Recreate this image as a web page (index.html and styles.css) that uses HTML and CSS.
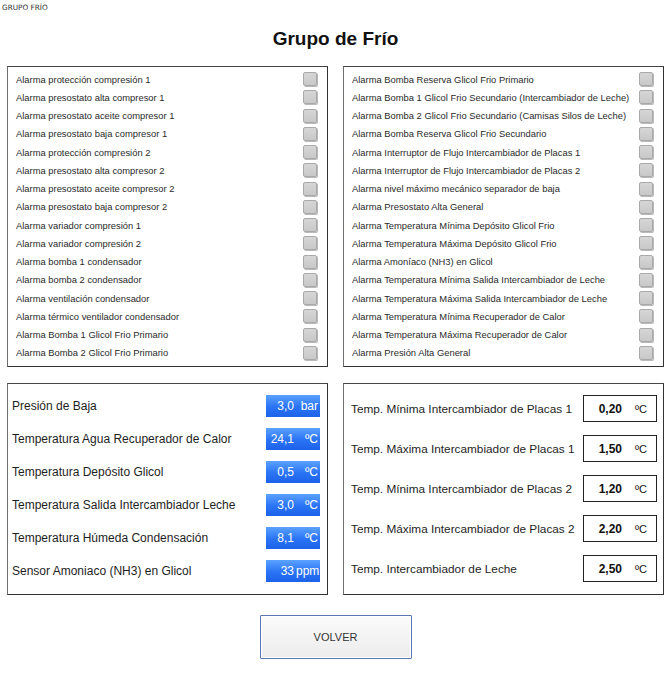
FILE: index.html
```html
<!DOCTYPE html>
<html lang="es">
<head>
<meta charset="utf-8">
<title>Grupo de Frío</title>
<link rel="stylesheet" href="styles.css">
</head>
<body>
<div class="page">
  <div class="caption">GRUPO FRÍO</div>
  <h1 class="title">Grupo de Frío</h1>
  <div class="grid">
    <div class="panel alarms">
      <div class="alarm"><span>Alarma protección compresión 1</span><i class="chk"></i></div>
      <div class="alarm"><span>Alarma presostato alta compresor 1</span><i class="chk"></i></div>
      <div class="alarm"><span>Alarma presostato aceite compresor 1</span><i class="chk"></i></div>
      <div class="alarm"><span>Alarma presostato baja compresor 1</span><i class="chk"></i></div>
      <div class="alarm"><span>Alarma protección compresión 2</span><i class="chk"></i></div>
      <div class="alarm"><span>Alarma presostato alta compresor 2</span><i class="chk"></i></div>
      <div class="alarm"><span>Alarma presostato aceite compresor 2</span><i class="chk"></i></div>
      <div class="alarm"><span>Alarma presostato baja compresor 2</span><i class="chk"></i></div>
      <div class="alarm"><span>Alarma variador compresión 1</span><i class="chk"></i></div>
      <div class="alarm"><span>Alarma variador compresión 2</span><i class="chk"></i></div>
      <div class="alarm"><span>Alarma bomba 1 condensador</span><i class="chk"></i></div>
      <div class="alarm"><span>Alarma bomba 2 condensador</span><i class="chk"></i></div>
      <div class="alarm"><span>Alarma ventilación condensador</span><i class="chk"></i></div>
      <div class="alarm"><span>Alarma térmico ventilador condensador</span><i class="chk"></i></div>
      <div class="alarm"><span>Alarma Bomba 1 Glicol Frio Primario</span><i class="chk"></i></div>
      <div class="alarm"><span>Alarma Bomba 2 Glicol Frio Primario</span><i class="chk"></i></div>
    </div>
    <div class="panel alarms">
      <div class="alarm"><span>Alarma Bomba Reserva Glicol Frio Primario</span><i class="chk"></i></div>
      <div class="alarm"><span>Alarma Bomba 1 Glicol Frio Secundario (Intercambiador de Leche)</span><i class="chk"></i></div>
      <div class="alarm"><span>Alarma Bomba 2 Glicol Frio Secundario (Camisas Silos de Leche)</span><i class="chk"></i></div>
      <div class="alarm"><span>Alarma Bomba Reserva Glicol Frio Secundario</span><i class="chk"></i></div>
      <div class="alarm"><span>Alarma Interruptor de Flujo Intercambiador de Placas 1</span><i class="chk"></i></div>
      <div class="alarm"><span>Alarma Interruptor de Flujo Intercambiador de Placas 2</span><i class="chk"></i></div>
      <div class="alarm"><span>Alarma nivel máximo mecánico separador de baja</span><i class="chk"></i></div>
      <div class="alarm"><span>Alarma Presostato Alta General</span><i class="chk"></i></div>
      <div class="alarm"><span>Alarma Temperatura Mínima Depósito Glicol Frio</span><i class="chk"></i></div>
      <div class="alarm"><span>Alarma Temperatura Máxima Depósito Glicol Frio</span><i class="chk"></i></div>
      <div class="alarm"><span>Alarma Amoníaco (NH3) en Glicol</span><i class="chk"></i></div>
      <div class="alarm"><span>Alarma Temperatura Mínima Salida Intercambiador de Leche</span><i class="chk"></i></div>
      <div class="alarm"><span>Alarma Temperatura Máxima Salida Intercambiador de Leche</span><i class="chk"></i></div>
      <div class="alarm"><span>Alarma Temperatura Mínima Recuperador de Calor</span><i class="chk"></i></div>
      <div class="alarm"><span>Alarma Temperatura Máxima Recuperador de Calor</span><i class="chk"></i></div>
      <div class="alarm"><span>Alarma Presión Alta General</span><i class="chk"></i></div>
    </div>
    <div class="panel readings">
      <div class="reading"><span class="label">Presión de Baja</span><span class="blue"><b>3,0</b><em>bar</em></span></div>
      <div class="reading"><span class="label">Temperatura Agua Recuperador de Calor</span><span class="blue"><b>24,1</b><em>ºC</em></span></div>
      <div class="reading"><span class="label">Temperatura Depósito Glicol</span><span class="blue"><b>0,5</b><em>ºC</em></span></div>
      <div class="reading"><span class="label">Temperatura Salida Intercambiador Leche</span><span class="blue"><b>3,0</b><em>ºC</em></span></div>
      <div class="reading"><span class="label">Temperatura Húmeda Condensación</span><span class="blue"><b>8,1</b><em>ºC</em></span></div>
      <div class="reading"><span class="label">Sensor Amoniaco (NH3) en Glicol</span><span class="blue"><b>33</b><em class="ppm">ppm</em></span></div>
    </div>
    <div class="panel setpoints">
      <div class="setpoint"><span class="label">Temp. Mínima Intercambiador de Placas 1</span><span class="white"><b>0,20</b><em>ºC</em></span></div>
      <div class="setpoint"><span class="label">Temp. Máxima Intercambiador de Placas 1</span><span class="white"><b>1,50</b><em>ºC</em></span></div>
      <div class="setpoint"><span class="label">Temp. Mínima Intercambiador de Placas 2</span><span class="white"><b>1,20</b><em>ºC</em></span></div>
      <div class="setpoint"><span class="label">Temp. Máxima Intercambiador de Placas 2</span><span class="white"><b>2,20</b><em>ºC</em></span></div>
      <div class="setpoint"><span class="label">Temp. Intercambiador de Leche</span><span class="white"><b>2,50</b><em>ºC</em></span></div>
    </div>
  </div>
  <div class="actions">
    <button class="back">VOLVER</button>
  </div>
</div>
</body>
</html>
```

FILE: styles.css
```css
* { box-sizing: border-box; }
html, body { margin: 0; padding: 0; background: #fff; }
body {
  width: 671px;
  height: 674px;
  overflow: hidden;
  font-family: "Liberation Sans", Arial, sans-serif;
  color: #222;
}
.page { position: relative; }
.caption {
  font-family: "DejaVu Sans", "Liberation Sans", sans-serif;
  font-size: 7.3px;
  color: #333;
  padding: 3px 0 0 2px;
  height: 12px;
  line-height: 9px;
}
.title {
  margin: 0;
  height: 54px;
  padding-top: 16px;
  text-align: center;
  font-size: 19px;
  line-height: 22px;
  font-weight: bold;
  color: #111;
}
.grid {
  display: grid;
  grid-template-columns: 321px 321px;
  grid-template-rows: 301px 212px;
  column-gap: 15px;
  row-gap: 16px;
  padding-left: 7px;
}
.panel {
  border: 1px solid #6e6e6e;
  border-top-color: #444;
  border-right-color: #333;
  border-bottom-color: #333;
  background: #fff;
}
.alarms {
  padding: 3px 10px 0 8px;
  display: flex;
  flex-direction: column;
}
.alarm {
  display: flex;
  align-items: center;
  justify-content: space-between;
  height: 18.25px;
  font-size: 9.4px;
  color: #2a2a2a;
  white-space: nowrap;
}
.chk {
  display: block;
  width: 14px;
  height: 14px;
  flex: none;
  border: 1px solid #a9a9a9;
  border-radius: 2px;
  background: linear-gradient(#d6d6d6, #c8c8c8);
  box-shadow: 1px 1px 0 #b9b9b9;
}
.readings {
  padding: 11px 7px 0 4px;
  display: flex;
  flex-direction: column;
  gap: 11px;
}
.reading, .setpoint {
  display: flex;
  align-items: center;
  justify-content: space-between;
}
.label {
  font-size: 12px;
  color: #1e1e1e;
  white-space: nowrap;
}
.setpoint .label { font-size: 11.8px; }
.blue {
  display: flex;
  align-items: center;
  width: 54px;
  height: 22px;
  background: linear-gradient(#5aa2ff, #2a73f5 55%, #1d62ea);
  color: #fff;
  font-size: 12px;
  padding-right: 2px;
}
.blue b {
  font-weight: normal;
  flex: 1;
  text-align: right;
}
.blue em {
  font-style: normal;
  width: 24px;
  text-align: right;
}
.blue em.ppm { width: 24px; padding-left: 2px; }
.setpoints {
  padding: 11px 6px 0 7px;
  display: flex;
  flex-direction: column;
  gap: 13px;
}
.white {
  display: flex;
  align-items: center;
  width: 74px;
  height: 27px;
  border: 1px solid #222;
  background: #fff;
  font-size: 12px;
  color: #111;
}
.white b {
  flex: 1;
  text-align: right;
  font-weight: bold;
  padding-right: 13px;
}
.white em {
  font-style: normal;
  width: 21px;
  text-align: left;
  font-size: 11px;
}
.actions {
  display: flex;
  justify-content: center;
  padding-top: 20px;
}
.back {
  width: 152px;
  height: 44px;
  border: 1px solid #5a78b4;
  border-radius: 1px;
  background: linear-gradient(#fbfbfb, #ececec);
  box-shadow: inset 0 0 0 1px #fff;
  font-family: "Liberation Sans", Arial, sans-serif;
  font-size: 11px;
  color: #333;
  padding: 0;
}
```
